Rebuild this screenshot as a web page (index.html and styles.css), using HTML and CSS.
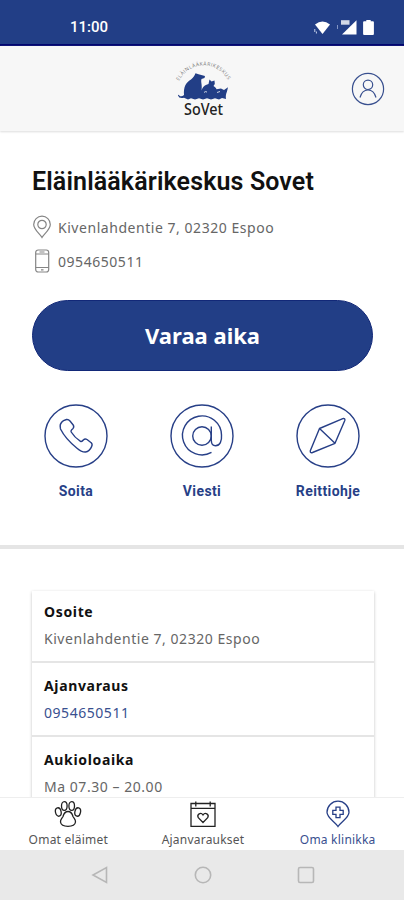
FILE: index.html
```html
<!DOCTYPE html>
<html lang="fi">
  <head>
    <meta charset="UTF-8" />
    <meta name="viewport" content="width=device-width, initial-scale=1.0" />
    <title>Eläinlääkärikeskus Sovet</title>
    <link rel="stylesheet" href="styles.css">
  </head>

  <body>
    <div class="phone">
      <!-- Status bar -->
      <div class="status-bar">
        <span class="clock">11:00</span>
        <svg class="status-icons" width="62" height="18" viewBox="0 0 62 18" fill="#fff">
          <path d="M1 5.6Q8.5 -.6 16 5.6L8.5 15z" />
          <path d="M.8 10v3M2.4 12.5v2" stroke="#c9d3ec" stroke-width="1" />
          <path d="M42.500 1.200V15.500H28z" />
          <path d="M27 1.200h8.500v4.500H27z" opacity=".8" />
          <path d="M23.500 6v4" stroke="#8294c4" />
          <path d="M52.300 2.300V1h4.400v1.300h2.200q1 0 1 1V15q0 1-1 1h-8.800q-1 0-1-1V3.300q0-1 1-1z" />
        </svg>
      </div>

      <!-- Header -->
      <div class="header">
        <svg class="logo" width="64" height="60" viewBox="0 0 64 60">
          <path id="logoArc" d="M8 22A27.500 27.500 0 0 1 57.500 22" fill="none" />
          <text class="logo-arc-text"><textPath href="#logoArc" textLength="60">ELÄINLÄÄKÄRIKESKUS</textPath></text>
          <path class="logo-animals" d="M13 38.800Q8 40 7 36.500Q7.500 35 8.500 36.800Q10.500 38.200 13 36C12.500 28 14.500 24 20 20.500C22.500 18.500 23.500 17 24.500 14.300L27.500 15.200L34 17L33.500 19L30.500 20C29.500 23 31.500 26 30.500 31.500C32 27.500 33.500 26 37.500 25L38.500 20.500L40.500 22.500L43.500 21.500L43.800 25L42.500 27C44 28 45 29 45.500 30.200L50 29.500L53 31L57 28.300L56 32.500C55 35 54.500 37 55 40L51 39L48 40.500L44 39.200L40 40.500L36 39.200L32 40.500L28 39.200L24 40.500L20 39.200L17 40.500z" />
          <path d="M33 33.500Q34 32 36 33M46 33.500l3-1" fill="none" stroke="#f8f8f8" stroke-width=".8" />
          <text class="logo-name" x="13" y="55.500" textLength="39" lengthAdjust="spacingAndGlyphs">SoVet</text>
        </svg>
        <svg class="profile" width="34" height="34" viewBox="0 0 34 34">
          <circle cx="17" cy="17" r="15.600" />
          <circle cx="17" cy="12.800" r="4.700" />
          <path d="M9 25.500C10.500 20 13.500 18 17 18s6.500 2 8 7.500" />
        </svg>
      </div>

      <div class="content">
        <!-- Clinic info -->
        <div class="clinic">
          <h1 class="clinic-name">Eläinlääkärikeskus Sovet</h1>
          <div class="contact">
            <svg width="20" height="24" viewBox="0 0 20 24">
              <path d="M10 22.500C8 19 1.700 14.500 1.700 9.500a8.300 8.300 0 0 1 16.600 0C18.300 14.500 12 19 10 22.500z" />
              <circle cx="10" cy="9.500" r="4.200" />
            </svg>
            <span class="contact-text">Kivenlahdentie 7, 02320 Espoo</span>
          </div>
          <div class="contact">
            <svg width="20" height="24" viewBox="0 0 20 24">
              <rect x="3.700" y="1" width="13" height="22" rx="2.500" />
              <path d="M3.700 5h13M3.700 18.500h13M7.500 3h5M9 20.800h2.500" />
            </svg>
            <span class="contact-text">0954650511</span>
          </div>
          <button class="book-btn">Varaa aika</button>

          <div class="actions">
            <div class="action">
              <svg width="64" height="64" viewBox="0 0 64 64">
                <circle cx="32" cy="32" r="31" />
                <path d="M19.500 16.700L22.500 15.500Q24.500 15.200 26 17L29.200 21Q30.500 23 28.800 24.700Q26.500 26.300 27.200 28Q30.500 33.500 36.500 37.300Q38 38 39.300 36Q41 34.400 43 35.500L47.200 38.800Q48.800 40.400 47.600 42.600Q45.500 47.500 41.500 48Q37.500 48.200 33 44.200Q21.500 35 16.500 25Q15 19.500 19.500 16.700z" />
              </svg>
              <span class="action-label">Soita</span>
            </div>
            <div class="action">
              <svg width="64" height="64" viewBox="0 0 64 64">
                <circle cx="32" cy="32" r="31" />
                <circle cx="32" cy="32" r="9.300" />
                <path d="M41.300 22.500V36.500Q41.500 41.800 45.500 41.800C50 41.800 52 37 51.500 31A19.500 19.500 0 1 0 41.500 48.400" />
              </svg>
              <span class="action-label">Viesti</span>
            </div>
            <div class="action">
              <svg width="64" height="64" viewBox="0 0 64 64">
                <circle cx="32" cy="32" r="31" />
                <path d="M23.500 24.500L46.800 14.600Q49.300 14 48.800 16.500L39 39.300L16.500 48.500Q14 49.300 14.300 46.800zM23.500 24.500L39 39.300" />
              </svg>
              <span class="action-label">Reittiohje</span>
            </div>
          </div>
        </div>

        <!-- Clinic details -->
        <div class="details">
          <div class="detail-row">
            <div class="detail-title">Osoite</div>
            <div class="detail-text">Kivenlahdentie 7, 02320 Espoo</div>
          </div>
          <div class="detail-row">
            <div class="detail-title">Ajanvaraus</div>
            <div class="detail-text link">0954650511</div>
          </div>
          <div class="detail-row">
            <div class="detail-title">Aukioloaika</div>
            <div class="detail-text">Ma 07.30 – 20.00</div>
          </div>
        </div>
      </div>

      <!-- Bottom tabs -->
      <div class="tabs">
        <div class="tab">
          <svg width="28" height="28" viewBox="0 0 28 28">
            <ellipse cx="4.300" cy="12" rx="2.800" ry="4.300" transform="rotate(-12 4.300 12)" />
            <ellipse cx="10.300" cy="6" rx="2.800" ry="4.300" />
            <ellipse cx="17.700" cy="6" rx="2.800" ry="4.300" />
            <ellipse cx="23.700" cy="12" rx="2.800" ry="4.300" transform="rotate(12 23.700 12)" />
            <path d="M14 11.500C17 11.500 18.300 14 19 16.500C20 18.500 21.700 19.500 21.500 22C21 25.500 18 26.300 14 26.300S7 25.500 6.500 22C6.300 19.500 8 18.500 9 16.500C9.700 14 11 11.500 14 11.500z" />
          </svg>
          <span class="tab-label">Omat eläimet</span>
        </div>
        <div class="tab">
          <svg width="28" height="28" viewBox="0 0 28 28">
            <path d="M2 3.500h24v22.800H2zM2 8.300h24M6.800 1.500v5M21.200 1.500v5M2 3.500v22.800" />
            <path d="M14 22.500L9.300 17.700C7.500 14.500 11.800 11.700 14 15C16.200 11.700 20.500 14.500 18.700 17.700z" />
          </svg>
          <span class="tab-label">Ajanvaraukset</span>
        </div>
        <div class="tab active">
          <svg width="28" height="28" viewBox="0 0 28 28">
            <path d="M14 26.500C11.500 22 3 18 3 12.200a11 11 0 0 1 22 0C25 18 16.500 22 14 26.500z" />
            <path d="M12 7.200h4v3.200h3.200v4H16v3.200h-4v-3.200H8.800v-4H12z" />
          </svg>
          <span class="tab-label">Oma klinikka</span>
        </div>
      </div>

      <!-- System navigation -->
      <div class="system-nav">
        <svg width="18" height="18" viewBox="0 0 18 18"><path d="M15.500 1.500v15L2 9z" /></svg>
        <svg width="18" height="18" viewBox="0 0 18 18"><circle cx="9" cy="9" r="7.700" /></svg>
        <svg width="18" height="18" viewBox="0 0 18 18"><rect x="1.500" y="1.500" width="15" height="15" rx="1.500" /></svg>
      </div>
    </div>
  </body>
</html>
```
FILE: styles.css
```css
* {
  box-sizing: border-box;
}

body {
  margin: 0;
  font-family: "Noto Sans", "Open Sans", sans-serif;
  background: #fff;
}

.phone {
  width: 404px;
  height: 900px;
  display: flex;
  flex-direction: column;
  overflow: hidden;
}

/* Status bar */
.status-bar {
  flex: none;
  height: 46px;
  padding: 10px 28px 0 70px;
  display: flex;
  justify-content: space-between;
  background: #223e86;
  border-bottom: 2px solid #00056f;
  color: #fff;
}

.clock {
  font-family: Roboto, sans-serif;
  font-size: 15px;
  font-weight: 500;
  line-height: 35px;
}

.status-icons {
  margin-top: 9px;
}

/* Header */
.header {
  flex: none;
  height: 85px;
  padding: 0 19px 0 171px;
  display: flex;
  align-items: center;
  justify-content: space-between;
  background: #f7f7f7;
  box-shadow: 0 1px 2px #ddd;
}

.logo-arc-text {
  font-family: "Open Sans", sans-serif;
  font-size: 5px;
  fill: #777;
}

.logo-animals {
  fill: #223e86;
}

.logo-name {
  font-family: "Noto Sans", sans-serif;
  font-size: 15.5px;
  font-weight: 500;
  fill: #222;
}

.profile {
  fill: none;
  stroke: #39508f;
  stroke-width: 1.2;
}

/* Clinic info */
.content {
  flex: 1;
  min-height: 0;
  overflow: hidden;
}

.clinic {
  height: 418px;
  padding: 33px 31px 0 32px;
  border-bottom: 4px solid #e5e5e5;
}

.clinic-name {
  margin: 0 0 10px;
  font-family: Roboto, sans-serif;
  font-size: 25px;
  font-weight: 600;
  line-height: 36px;
  letter-spacing: 0.13px;
  color: #111;
  white-space: nowrap;
}

.contact {
  height: 34px;
  display: flex;
  align-items: center;
  gap: 6px;
  color: #666;
  font-size: 14px;
}

.contact svg {
  fill: none;
  stroke: #858585;
  stroke-width: 1.2;
}

.contact-text {
  letter-spacing: 0.54px;
}

.book-btn {
  display: block;
  width: 341px;
  height: 71px;
  margin-top: 22px;
  padding-bottom: 3px;
  border: 1px solid #122878;
  border-radius: 36px;
  background: #223e86;
  color: #fff;
  font-family: "Noto Sans", sans-serif;
  font-size: 22px;
  font-weight: 700;
}

.actions {
  display: flex;
  justify-content: space-between;
  margin: 33px 13px 0 12px;
}

.action {
  width: 64px;
  display: flex;
  flex-direction: column;
  align-items: center;
}

.action svg {
  fill: none;
  stroke: #273f87;
  stroke-width: 1.4;
  stroke-linejoin: round;
}

.action-label {
  margin-top: 13px;
  font-family: Roboto, sans-serif;
  font-size: 14px;
  font-weight: 700;
  line-height: 21px;
  letter-spacing: 0.4px;
  color: #273f87;
  white-space: nowrap;
}

/* Clinic details */
.details {
  margin: 42px 30px 0 32px;
  box-shadow: 0 1px 3px rgba(0, 0, 0, 0.24);
}

.detail-row {
  height: 74px;
  padding: 8px 12px 0;
  border-bottom: 2px solid #e5e5e5;
}

.detail-row:first-child {
  height: 72px;
}

.detail-title {
  font-size: 14px;
  font-weight: 700;
  line-height: 25px;
  letter-spacing: 0.65px;
  color: #111;
}

.detail-row + .detail-row .detail-title {
  padding-top: 2px;
}

.detail-text {
  font-size: 14px;
  line-height: 30px;
  letter-spacing: 0.54px;
  color: #666;
}

.detail-text.link {
  color: #39508f;
}

/* Bottom tabs */
.tabs {
  flex: none;
  height: 53px;
  display: flex;
  background: #fff;
  border-top: 1px solid #eee;
}

.tab {
  flex: 1;
  padding-top: 2px;
  display: flex;
  flex-direction: column;
  align-items: center;
  color: #555;
}

.tab svg {
  margin-left: 2px;
  fill: none;
  stroke: #222;
  stroke-width: 1.3;
}

.tab-label {
  font-size: 12px;
  line-height: 20px;
  margin: 2px 0 0 2px;
  letter-spacing: 0.22px;
}

.tab.active {
  color: #39508f;
}

.tab.active svg {
  stroke: #273f87;
}

/* System navigation */
.system-nav {
  flex: none;
  height: 50px;
  padding: 0 89px 0 91px;
  display: flex;
  align-items: center;
  justify-content: space-between;
  background: #e9e9e9;
}

.system-nav svg {
  fill: none;
  stroke: #b7b7b7;
  stroke-width: 1.6;
}
```
